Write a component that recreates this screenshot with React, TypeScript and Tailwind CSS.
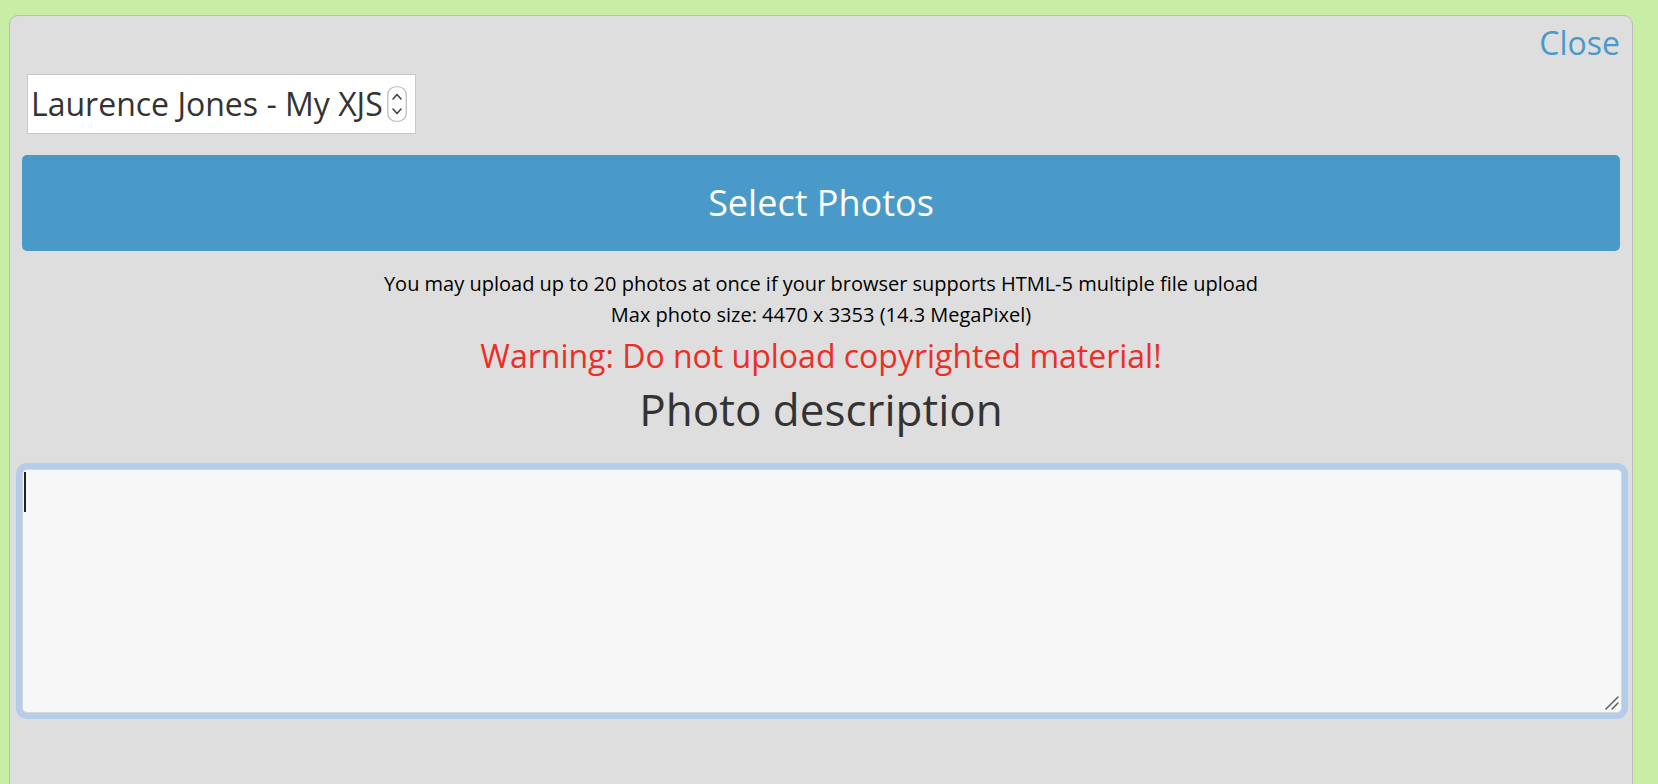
export default function App() {
  return (
    <div className="h-screen overflow-hidden bg-[#c8eea6] pt-[15px] pl-[9px] pr-[25px] font-['Open_Sans',sans-serif]">
      <div className="h-[820px] rounded-[9px] border border-[#bdbdbd] bg-[#dedede]">
        <div className="flex justify-end pt-[7px] pr-3">
          <a href="#" className="text-[32px] leading-[40px] text-[#4a9ac9]">
            Close
          </a>
        </div>

        <div className="mt-[11px] ml-[17px] flex h-[60px] w-[389px] items-center border border-[#c8c8c8] bg-white pl-[3px]">
          <span className="whitespace-nowrap text-[32px] leading-[58px] text-[#333]">
            Laurence Jones - My XJS
          </span>
          <svg width="20" height="36" viewBox="0 0 20 36" className="ml-[4px]">
            <rect x="0.75" y="0.75" width="18.5" height="34.5" rx="8" fill="#fff" stroke="#b9b9b9" strokeWidth="1.2" />
            <path d="M6 13l4-4.5 4 4.5" fill="none" stroke="#444" strokeWidth="1.6" strokeLinecap="round" strokeLinejoin="round" />
            <path d="M6 23l4 4.5 4-4.5" fill="none" stroke="#444" strokeWidth="1.6" strokeLinecap="round" strokeLinejoin="round" />
          </svg>
        </div>

        <button className="mx-3 mt-[21px] block h-[96px] w-[calc(100%-24px)] rounded-[5px] bg-[#4a9ac9] text-center text-[36px] leading-[96px] text-white">
          Select Photos
        </button>

        <div className="mt-[17px] text-center text-black">
          <p className="text-[20px] leading-[31px]">
            You may upload up to 20 photos at once if your browser supports HTML-5 multiple file upload
          </p>
          <p className="text-[20px] leading-[31px]">Max photo size: 4470 x 3353 (14.3 MegaPixel)</p>
          <p className="mt-[4px] text-[32px] leading-[44px] text-[#ec2f26]">
            Warning: Do not upload copyrighted material!
          </p>
          <h2 className="mt-[3px] text-[44px] leading-[56px] text-[#333]">Photo description</h2>
        </div>

        <div className="relative mt-[32px] ml-3 mr-[10px]">
          <textarea className="block h-[244px] w-full resize-none rounded-[5px] border border-[#d6d6d6] bg-[#f7f7f7] px-2 text-[32px] outline-none ring-[6px] ring-[#b4cdea]" />
          <div className="absolute left-[2px] top-[3px] h-[40px] w-[2px] bg-[#222]" />
          <svg width="16" height="16" viewBox="0 0 16 16" className="pointer-events-none absolute right-[2px] bottom-[2px]">
            <path d="M2 14L14 2M8 14l6-6" fill="none" stroke="#666" strokeWidth="1.6" strokeLinecap="round" />
          </svg>
        </div>
      </div>
    </div>
  );
}
